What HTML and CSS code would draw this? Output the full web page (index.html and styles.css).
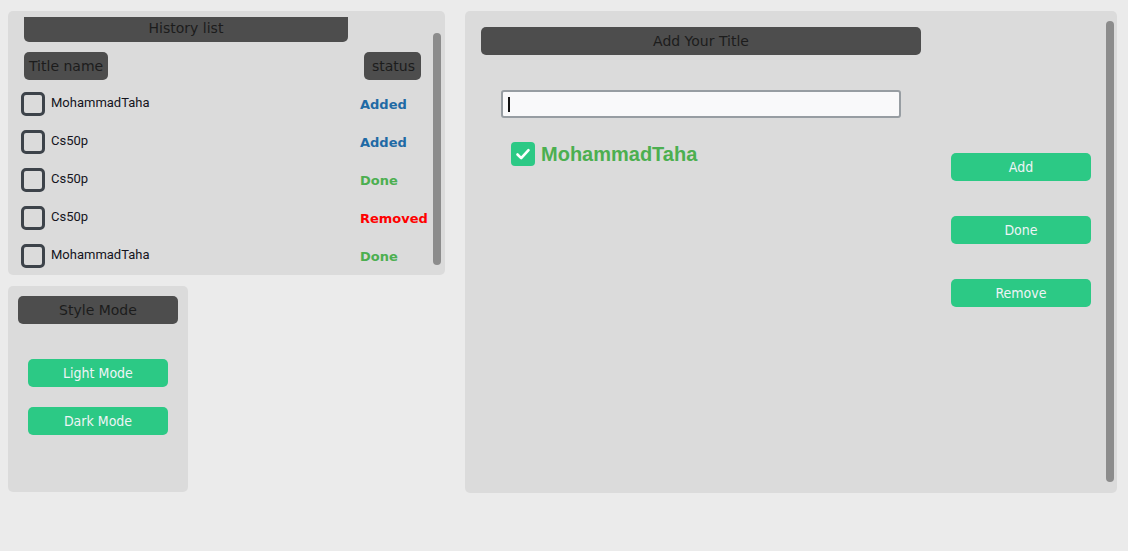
FILE: index.html
```html
<!DOCTYPE html>
<html>
<head>
<meta charset="utf-8">
<link rel="stylesheet" href="styles.css">
</head>
<body>
<div class="app">
  <div class="left-col">
    <section class="panel history">
      <div class="history-content">
        <div class="history-title">History list</div>
        <div class="col-heads">
          <div class="tag">Title name</div>
          <div class="tag tag-wide">status</div>
        </div>
        <div class="rows">
          <div class="row"><span class="box"></span><span class="name">MohammadTaha</span><span class="st added">Added</span></div>
          <div class="row"><span class="box"></span><span class="name">Cs50p</span><span class="st added">Added</span></div>
          <div class="row"><span class="box"></span><span class="name">Cs50p</span><span class="st done">Done</span></div>
          <div class="row"><span class="box"></span><span class="name">Cs50p</span><span class="st removed">Removed</span></div>
          <div class="row"><span class="box"></span><span class="name">MohammadTaha</span><span class="st done">Done</span></div>
        </div>
      </div>
      <div class="scrollbar small"></div>
    </section>
    <section class="panel mode">
      <div class="mode-title">Style Mode</div>
      <div class="mode-buttons">
        <button class="btn">Light Mode</button>
        <button class="btn">Dark Mode</button>
      </div>
    </section>
  </div>
  <section class="panel main">
    <div class="main-col">
      <div class="main-title">Add Your Title</div>
      <div class="input"><span class="caret"></span></div>
      <div class="item">
        <span class="checked"><svg width="24" height="24" viewBox="0 0 24 24"><path d="M6.5 12.5 L10.2 16.2 L17.5 8.2" fill="none" stroke="#ffffff" stroke-width="2.6" stroke-linecap="round" stroke-linejoin="round"/></svg></span>
        <span class="item-text">MohammadTaha</span>
      </div>
    </div>
    <div class="actions">
      <button class="btn">Add</button>
      <button class="btn">Done</button>
      <button class="btn">Remove</button>
    </div>
    <div class="scrollbar big"></div>
  </section>
</div>
</body>
</html>
```

FILE: styles.css
```css
html, body {
  margin: 0;
  padding: 0;
  background: #ebebeb;
  width: 1128px;
  height: 551px;
  overflow: hidden;
}
.app {
  display: flex;
  align-items: flex-start;
  gap: 20px;
  padding: 11px 0 0 8px;
}
.left-col {
  display: flex;
  flex-direction: column;
  gap: 11px;
}
.panel {
  background: #dbdbdb;
  border-radius: 5px;
  box-sizing: border-box;
}
.history {
  width: 437px;
  height: 264px;
  display: flex;
  overflow: hidden;
}
.history-content {
  width: 425px;
  padding-left: 13px;
  box-sizing: border-box;
}
.history-title {
  margin: 6px 0 0 3px;
  width: 324px;
  height: 25px;
  background: #4d4d4d;
  border-radius: 0 0 5px 5px;
  color: #1c1c1c;
  font: 14px/23px "DejaVu Sans", Verdana, sans-serif;
  text-align: center;
}
.col-heads {
  display: flex;
  justify-content: space-between;
  margin: 10px 12px 0 3px;
}
.tag {
  background: #4d4d4d;
  border-radius: 5px;
  height: 28px;
  padding: 0 5px;
  color: #1c1c1c;
  font: 14px/28px "DejaVu Sans", Verdana, sans-serif;
}
.tag-wide {
  padding: 0 6px 0 8px;
}
.rows {
  margin-top: 12px;
  display: flex;
  flex-direction: column;
  gap: 14px;
}
.row {
  display: grid;
  grid-template-columns: 24px 1fr 73px;
  column-gap: 6px;
  align-items: center;
  height: 24px;
}
.box {
  width: 24px;
  height: 24px;
  box-sizing: border-box;
  border: 3px solid #3d434a;
  border-radius: 5px;
}
.name {
  font: 13px Roboto, "Liberation Sans", sans-serif;
  color: #14141c;
  margin-top: -3px;
}
.st {
  font: bold 13px "DejaVu Sans", Verdana, sans-serif;
}
.added { color: #1f6aa5; }
.done { color: #4caf50; }
.removed { color: #ff0000; }
.scrollbar {
  width: 8px;
  background: #8c8c8c;
  border-radius: 4px;
  flex: none;
}
.scrollbar.small {
  height: 232px;
  margin-top: 22px;
}
.mode {
  width: 180px;
  height: 206px;
  padding: 10px 10px 0;
}
.mode-title {
  height: 28px;
  background: #4d4d4d;
  border-radius: 5px;
  color: #1c1c1c;
  font: 14px/28px "DejaVu Sans", Verdana, sans-serif;
  text-align: center;
}
.mode-buttons {
  margin: 35px 0 0 10px;
  display: flex;
  flex-direction: column;
  gap: 20px;
}
.btn {
  display: block;
  width: 140px;
  height: 28px;
  border: none;
  border-radius: 5px;
  background: #2cc985;
  color: #eef4f6;
  font: 14px/28px "DejaVu Sans Condensed", "DejaVu Sans", sans-serif;
  padding: 0;
  margin: 0;
}
.main {
  width: 652px;
  height: 482px;
  display: flex;
  align-items: flex-start;
  padding-left: 16px;
}
.main-col {
  width: 440px;
  padding-top: 16px;
}
.main-title {
  height: 28px;
  background: #4d4d4d;
  border-radius: 5px;
  color: #1c1c1c;
  font: 14px/28px "DejaVu Sans", Verdana, sans-serif;
  text-align: center;
}
.input {
  margin: 35px 0 0 20px;
  width: 400px;
  height: 28px;
  box-sizing: border-box;
  border: 2px solid #979da2;
  border-radius: 3px;
  background: #f9f9fa;
  display: flex;
  align-items: center;
  padding-left: 5px;
}
.caret {
  width: 2px;
  height: 15px;
  background: #111;
}
.item {
  margin: 24px 0 0 30px;
  display: flex;
  align-items: center;
  gap: 6px;
}
.checked {
  width: 24px;
  height: 24px;
  border-radius: 4px;
  background: #2cc985;
  display: flex;
}
.item-text {
  font: bold 20px "Liberation Sans", Arial, sans-serif;
  color: #4caf50;
}
.actions {
  margin: 142px 0 0 30px;
  display: flex;
  flex-direction: column;
  gap: 35px;
}
.scrollbar.big {
  height: 461px;
  margin: 10px 0 0 15px;
}
```
